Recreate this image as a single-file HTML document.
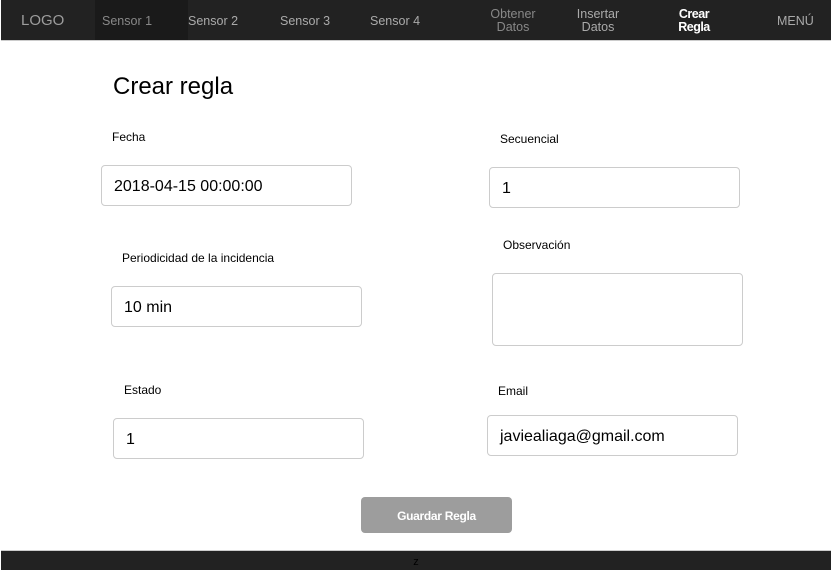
<!DOCTYPE html>
<html><head><style>
body{margin:0;width:833px;height:571px;background:#fff;font-family:"Liberation Sans",Arial,sans-serif;position:relative;overflow:hidden}
.nav{position:absolute;left:1px;top:0;width:830px;height:40px;background:#222;border-bottom:1px solid #ccc}
.n{position:absolute;color:#9d9d9d;font-size:12.5px;text-align:center;line-height:13px}
.a{position:absolute;font-size:13px;color:#000}
.in{position:absolute;border:1px solid #ccc;border-radius:4px;height:39px;box-sizing:border-box;font-size:16px;color:#000;padding-left:12px;line-height:41px}
</style></head><body>
<div class="nav">
<div class="n" style="left:20px;top:14px;font-size:15px">LOGO</div>
<div style="position:absolute;left:94px;top:0;width:93px;height:40px;background:#1a1a1a"></div>
<div class="n" style="left:101px;top:15px;color:#888">Sensor 1</div>
<div class="n" style="left:187px;top:15px;color:#aaa">Sensor 2</div>
<div class="n" style="left:279px;top:15px;color:#aaa">Sensor 3</div>
<div class="n" style="left:369px;top:15px;color:#aaa">Sensor 4</div>
<div class="n" style="left:484px;top:8px;width:56px;color:#888">Obtener<br>Datos</div>
<div class="n" style="left:570px;top:8px;width:54px;color:#aaa">Insertar<br>Datos</div>
<div class="n" style="left:670px;top:8px;width:46px;color:#fff;font-weight:bold;letter-spacing:-0.5px">Crear<br>Regla</div>
<div class="n" style="left:776px;top:15px;color:#aaa">MENÚ</div>
</div>
<div class="a" style="left:113px;top:73px;font-size:24px">Crear regla</div>
<div class="a" style="left:112px;top:130px;font-size:12px">Fecha</div>
<div class="in" style="left:101px;top:165px;width:251px;height:41px">2018-04-15 00:00:00</div>
<div class="a" style="left:500px;top:132px;font-size:12px">Secuencial</div>
<div class="in" style="left:489px;top:167px;width:251px;height:41px">1</div>
<div class="a" style="left:122px;top:251px;font-size:12px">Periodicidad de la incidencia</div>
<div class="in" style="left:111px;top:286px;width:251px;height:41px">10 min</div>
<div class="a" style="left:503px;top:238px;font-size:12px">Observación</div>
<div class="in" style="left:492px;top:273px;width:251px;height:73px"></div>
<div class="a" style="left:124px;top:383px;font-size:12px">Estado</div>
<div class="in" style="left:113px;top:418px;width:251px;height:41px">1</div>
<div class="a" style="left:498px;top:384px;font-size:12px">Email</div>
<div class="in" style="left:487px;top:415px;width:251px;height:41px">javiealiaga@gmail.com</div>
<div style="position:absolute;left:361px;top:497px;width:151px;height:36px;background:#9d9d9d;border-radius:4px;color:#fff;font-weight:bold;font-size:12px;text-align:center;line-height:38px;letter-spacing:-0.3px">Guardar Regla</div>
<div style="position:absolute;left:1px;top:550px;width:830px;height:19px;background:#222;border-top:1px solid #ccc;font-size:11px;text-align:center;line-height:22px;color:#000">z</div>
</body></html>
